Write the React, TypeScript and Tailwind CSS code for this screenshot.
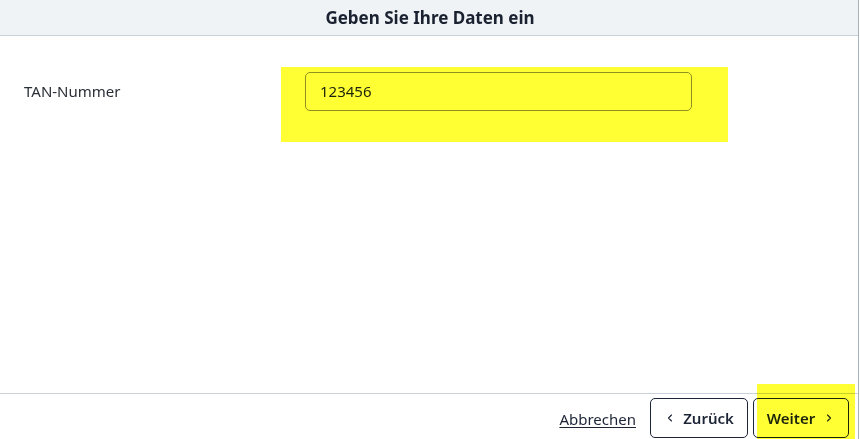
import React from 'react';
import { ChevronLeft, ChevronRight } from 'lucide-react';

const font = { fontFamily: '"Noto Sans", "Open Sans", sans-serif' };

export default function App() {
  return (
    <div className="relative flex h-[439px] w-[860px] overflow-hidden bg-white text-[#1c2436]" style={font}>
      <div className="flex h-full w-[858px] flex-col">
        {/* HEADER */}
        <header className="flex h-[36px] shrink-0 items-center justify-center border-b border-[#c9d1d9] bg-[#eff3f6]">
          <h1 className="pl-[2px] text-[17px] font-bold text-[#1a2130]">Geben Sie Ihre Daten ein</h1>
        </header>

        {/* FORM */}
        <main className="flex-1 pt-[36px]">
          <div className="flex items-center">
            <label className="w-[305px] pl-[24px] text-[15px] text-[#2b2f38]">TAN-Nummer</label>
            <div className="flex h-[39px] w-[387px] items-center rounded-[5px] border border-[#8e9296] bg-white px-[14px] text-[15px] text-[#1c2436]">
              123456
            </div>
          </div>
        </main>

        {/* FOOTER */}
        <footer className="flex h-[46px] shrink-0 items-start justify-end border-t border-[#c9d1d9] pr-[9px] pt-[4px]">
          <a href="#" className="mr-[14px] mt-[10px] text-[15px] text-[#1c2436] underline underline-offset-2">
            Abbrechen
          </a>
          <button className="mr-[5px] flex h-[40px] w-[98px] items-center justify-center gap-[7px] rounded-[5px] border border-[#1c2436] bg-white text-[15px] font-semibold">
            <ChevronLeft size={12} strokeWidth={2.2} />
            Zurück
          </button>
          <button className="flex h-[40px] w-[96px] items-center justify-center gap-[8px] rounded-[5px] border border-[#1c2436] bg-white text-[15px] font-semibold">
            Weiter
            <ChevronRight size={12} strokeWidth={2.2} />
          </button>
        </footer>
      </div>
      <div className="h-full w-px bg-[#a9b1b9]" />

      {/* highlight marks */}
      <div className="pointer-events-none absolute left-[281px] top-[67px] h-[75px] w-[447px] bg-[#ffff33] mix-blend-multiply" />
      <div className="pointer-events-none absolute left-[757px] top-[384px] h-[55px] w-[98px] bg-[#ffff33] mix-blend-multiply" />
    </div>
  );
}
